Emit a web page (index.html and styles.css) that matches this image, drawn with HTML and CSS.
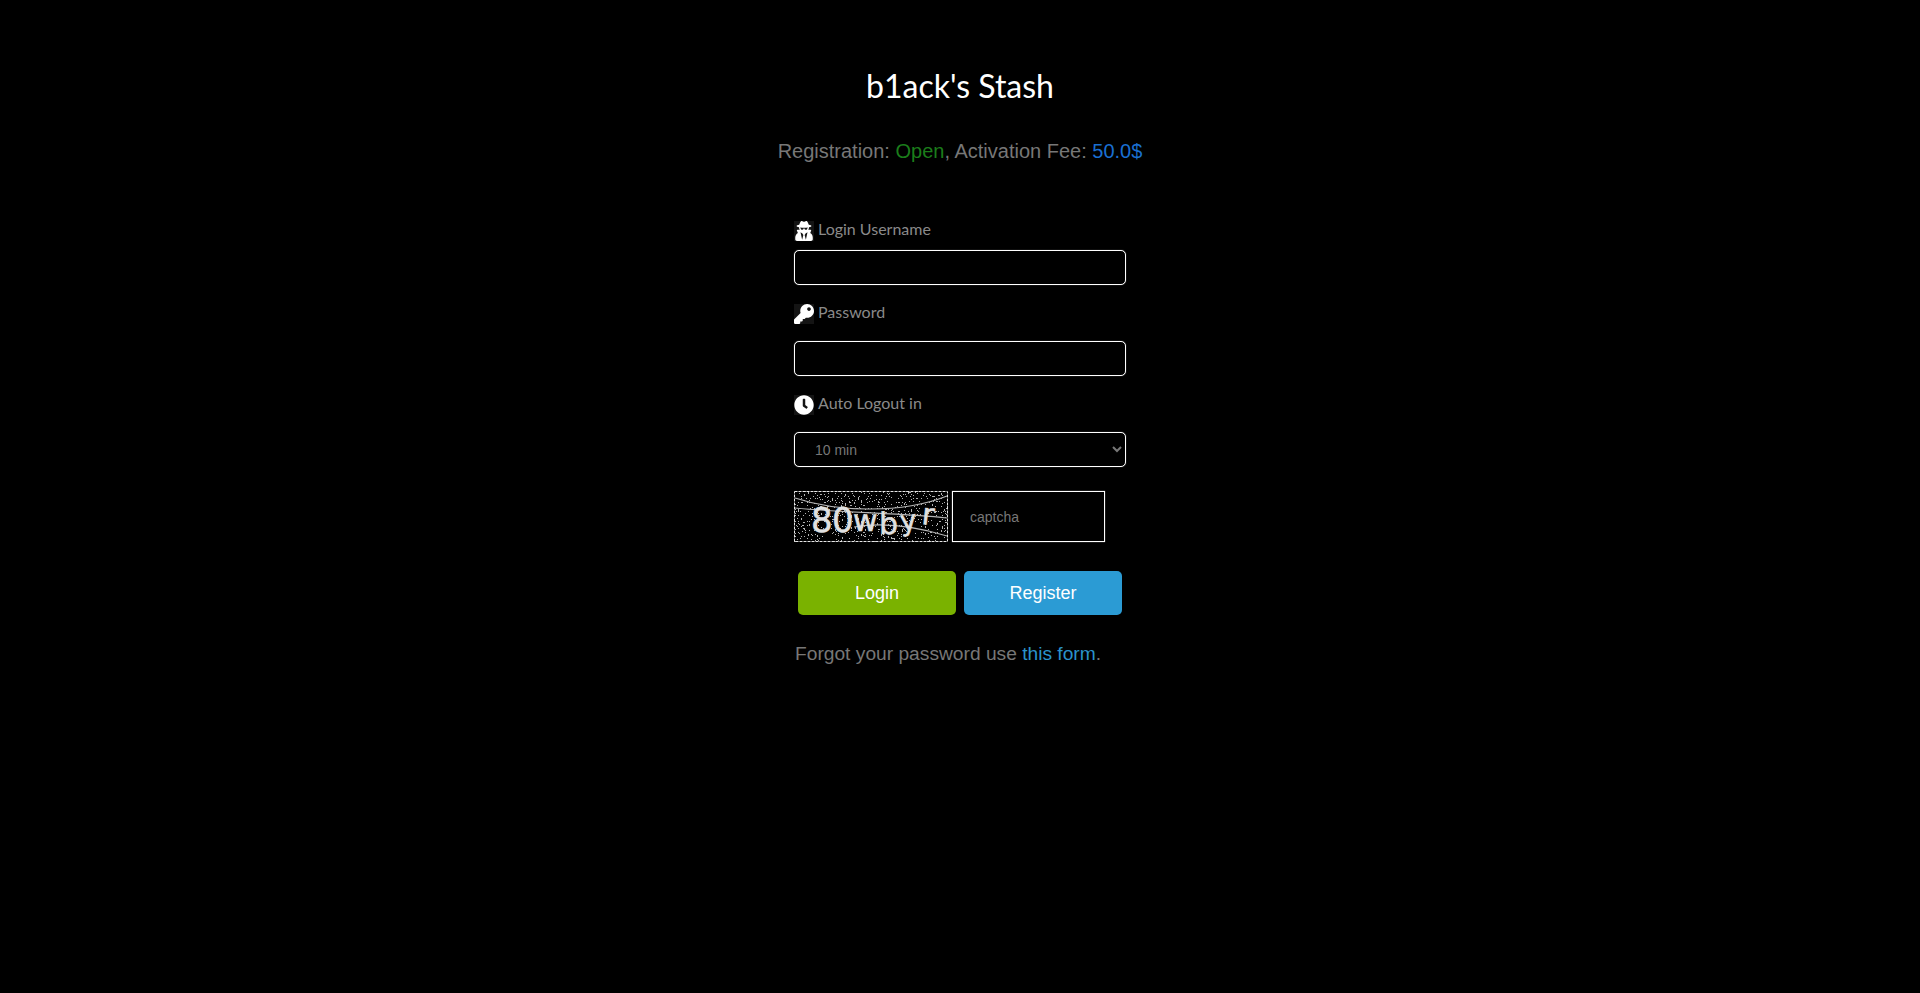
FILE: index.html
```html
<!DOCTYPE html>
<html lang="en">
<head>
  <meta charset="UTF-8">
  <title>b1ack's Stash</title>
  <link rel="stylesheet" href="styles.css">
</head>
<body>
  <div class="page">
    <h1 class="title">b1ack's Stash</h1>
    <p class="status">Registration: <span class="open">Open</span>, Activation Fee: <span class="fee">50.0$</span></p>

    <form class="login-form">
      <label class="field-label label-user">
        <svg class="icon" viewBox="0 0 448 512"><path d="M383.9 308.3l23.9-62.6c4-10.5-3.7-21.7-15-21.7h-58.5c11-18.9 17.8-40.6 17.8-64v-.3c39.2-7.8 64-19.1 64-31.7 0-13.3-27.3-25.1-70.1-33-9.2-32.8-27-65.8-40.6-82.8-9.5-11.9-25.9-15.6-39.5-8.8l-27.6 13.8c-9 4.5-19.6 4.5-28.6 0L182.1 3.4c-13.6-6.8-30-3.1-39.5 8.8-13.5 17-31.4 50-40.6 82.8-42.7 7.9-70 19.7-70 33 0 12.6 24.8 23.9 64 31.7v.3c0 23.4 6.8 45.1 17.8 64H56.3c-11.5 0-19.2 11.7-14.7 22.3l25.8 60.2C27.3 329.8 0 372.7 0 422.4v44.8C0 491.9 20.1 512 44.8 512h358.4c24.7 0 44.8-20.1 44.8-44.8v-44.8c0-48.4-25.8-90.4-64.1-114.1zM176 480l-41.6-192 49.6 32 24 40-32 120zm96 0l-32-120 24-40 49.6-32L272 480zm41.7-298.5c-3.9 11.9-7 24.6-16.5 33.4-10.1 9.3-48 22.4-64-25-2.8-8.4-15.4-8.4-18.3 0-17 50.2-56 32.4-64 25-9.5-8.8-12.7-21.5-16.5-33.4-.8-2.5-6.3-5.7-6.3-5.8v-10.8c28.3 3.6 61 5.8 96 5.8s67.7-2.1 96-5.8v10.8c-.1.1-5.6 3.2-6.4 5.8z"/></svg>
        Login Username
      </label>
      <input class="text-input" type="text">

      <label class="field-label">
        <svg class="icon" viewBox="0 0 512 512"><path d="M512 176.001C512 273.203 433.202 352 336 352c-11.22 0-22.19-1.062-32.827-3.069l-24.012 27.014A23.999 23.999 0 0 1 261.223 384H224v40c0 13.255-10.745 24-24 24h-40v40c0 13.255-10.745 24-24 24H24c-13.255 0-24-10.745-24-24v-78.059c0-6.365 2.529-12.47 7.029-16.971l161.802-161.802C163.108 213.814 160 195.271 160 176 160 78.798 238.797.001 335.999 0 433.488-.001 512 78.511 512 176.001zM336 128c0 26.51 21.49 48 48 48s48-21.49 48-48-21.49-48-48-48-48 21.49-48 48z"/></svg>
        Password
      </label>
      <input class="text-input" type="password">

      <label class="field-label">
        <svg class="icon" viewBox="0 0 512 512"><path d="M256,8C119,8,8,119,8,256S119,504,256,504,504,393,504,256,393,8,256,8Zm92.49,313h0l-20,25a16,16,0,0,1-22.49,2.5h0l-67-49.72a40,40,0,0,1-15-31.23V112a16,16,0,0,1,16-16h32a16,16,0,0,1,16,16V256l58,42.5A16,16,0,0,1,348.49,321Z"/></svg>
        Auto Logout in
      </label>
      <select class="text-input select-input">
        <option>10 min</option>
        <option>20 min</option>
        <option>30 min</option>
      </select>

      <div class="captcha-row">
        <svg class="captcha-img" viewBox="0 0 154 51">
          <defs>
            <filter id="noise" x="0" y="0" width="100%" height="100%" color-interpolation-filters="sRGB">
              <feTurbulence type="fractalNoise" baseFrequency="0.7" numOctaves="2" seed="7"/>
              <feColorMatrix values="0 0 0 0 1  0 0 0 0 1  0 0 0 0 1  6 0 0 0 -3.45"/>
              <feComponentTransfer><feFuncA type="discrete" tableValues="0 0.7"/></feComponentTransfer>
            </filter>
          </defs>
          <rect width="154" height="51" fill="#000"/>
          <rect width="154" height="51" filter="url(#noise)"/>
          <g fill="none" stroke="#b5b5b5" stroke-width="1.2">
            <path d="M1 7C40 20 105 24 153 5"/>
            <path d="M1 17C50 22 110 22 153 27"/>
            <path d="M60 36C90 31 120 35 153 45"/>
          </g>
          <text class="captcha-text">
            <tspan x="17" y="41" font-size="34">8</tspan>
            <tspan x="38" y="41" font-size="34">0</tspan>
            <tspan x="59" y="40" font-size="30">w</tspan>
            <tspan x="85" y="43" font-size="30">b</tspan>
            <tspan x="107" y="40" font-size="28" rotate="-6">y</tspan>
            <tspan x="127" y="33" font-size="30" rotate="6">r</tspan>
          </text>
          <rect x="0.5" y="0.5" width="153" height="50" fill="none" stroke="#e8e8e8" stroke-dasharray="3 1"/>
        </svg>
        <input class="captcha-input" type="text" placeholder="captcha">
      </div>

      <div class="button-row">
        <button class="btn btn-login" type="button">Login</button>
        <button class="btn btn-register" type="button">Register</button>
      </div>

      <p class="forgot">Forgot your password use <a href="#">this form</a>.</p>
    </form>
  </div>
</body>
</html>
```

FILE: styles.css
```css
* {
  box-sizing: border-box;
}
body {
  margin: 0;
  background: #000;
  font-family: "Liberation Sans", Arial, sans-serif;
  color: #777;
}
.page {
  width: 400px;
  margin: 0 auto;
  padding-top: 64px;
  text-align: center;
}
.title {
  margin: 0;
  font-family: Lato, sans-serif;
  font-size: 32px;
  font-weight: 400;
  line-height: 43px;
  color: #fff;
}
.status {
  margin: 31px 0 0;
  font-size: 20px;
  line-height: 26px;
}
.open {
  color: #1b7d1b;
}
.fee {
  color: #1a6fd1;
}
.login-form {
  width: 332px;
  margin: 53px auto 0;
  text-align: left;
}
.field-label {
  display: flex;
  align-items: center;
  gap: 4px;
  height: 22px;
  margin: 15px 0 19px;
  font-family: Lato, sans-serif;
  font-size: 16px;
  color: #8a8a8a;
}
.label-user {
  margin: 0 0 11px;
}
.icon {
  width: 20px;
  height: 20px;
  margin-top: 5px;
  background: #141414;
  fill: #fff;
}
.text-input {
  display: block;
  width: 332px;
  height: 35px;
  padding: 0 12px;
  background: #000;
  border: 1px solid #fff;
  border-radius: 5px;
  box-shadow: 0 0 1px rgba(255, 255, 255, 0.6);
  color: #777;
  font-family: "Liberation Sans", Arial, sans-serif;
  font-size: 14px;
}
.select-input {
  padding-left: 16px;
}
.captcha-row {
  display: flex;
  gap: 4px;
  margin-top: 24px;
}
.captcha-img {
  width: 154px;
  height: 51px;
  flex: none;
}
.captcha-text {
  font-family: "DejaVu Sans", sans-serif;
  text-rendering: geometricPrecision;
  fill: #e0e0e0;
  stroke: #e0e0e0;
  stroke-width: 0.5;
}
.captcha-input {
  width: 153px;
  height: 51px;
  padding: 0 17px;
  background: #000;
  border: 1px solid #fff;
  border-radius: 0;
  box-shadow: 0 0 1px rgba(255, 255, 255, 0.6);
  color: #777;
  font-family: "Liberation Sans", Arial, sans-serif;
  font-size: 14px;
}
.captcha-input::placeholder {
  color: #777;
}
.button-row {
  display: flex;
  justify-content: center;
  gap: 8px;
  margin-top: 29px;
}
.btn {
  width: 158px;
  height: 44px;
  border: none;
  border-radius: 5px;
  color: #fff;
  font-family: "Liberation Sans", Arial, sans-serif;
  font-size: 18px;
}
.btn-login {
  background: #7ab200;
}
.btn-register {
  background: #2b9bd4;
}
.forgot {
  margin: 27px 0 0;
  padding-left: 1px;
  font-size: 19.2px;
  line-height: 24px;
}
.forgot a {
  color: #2b93cb;
  text-decoration: none;
}
```
